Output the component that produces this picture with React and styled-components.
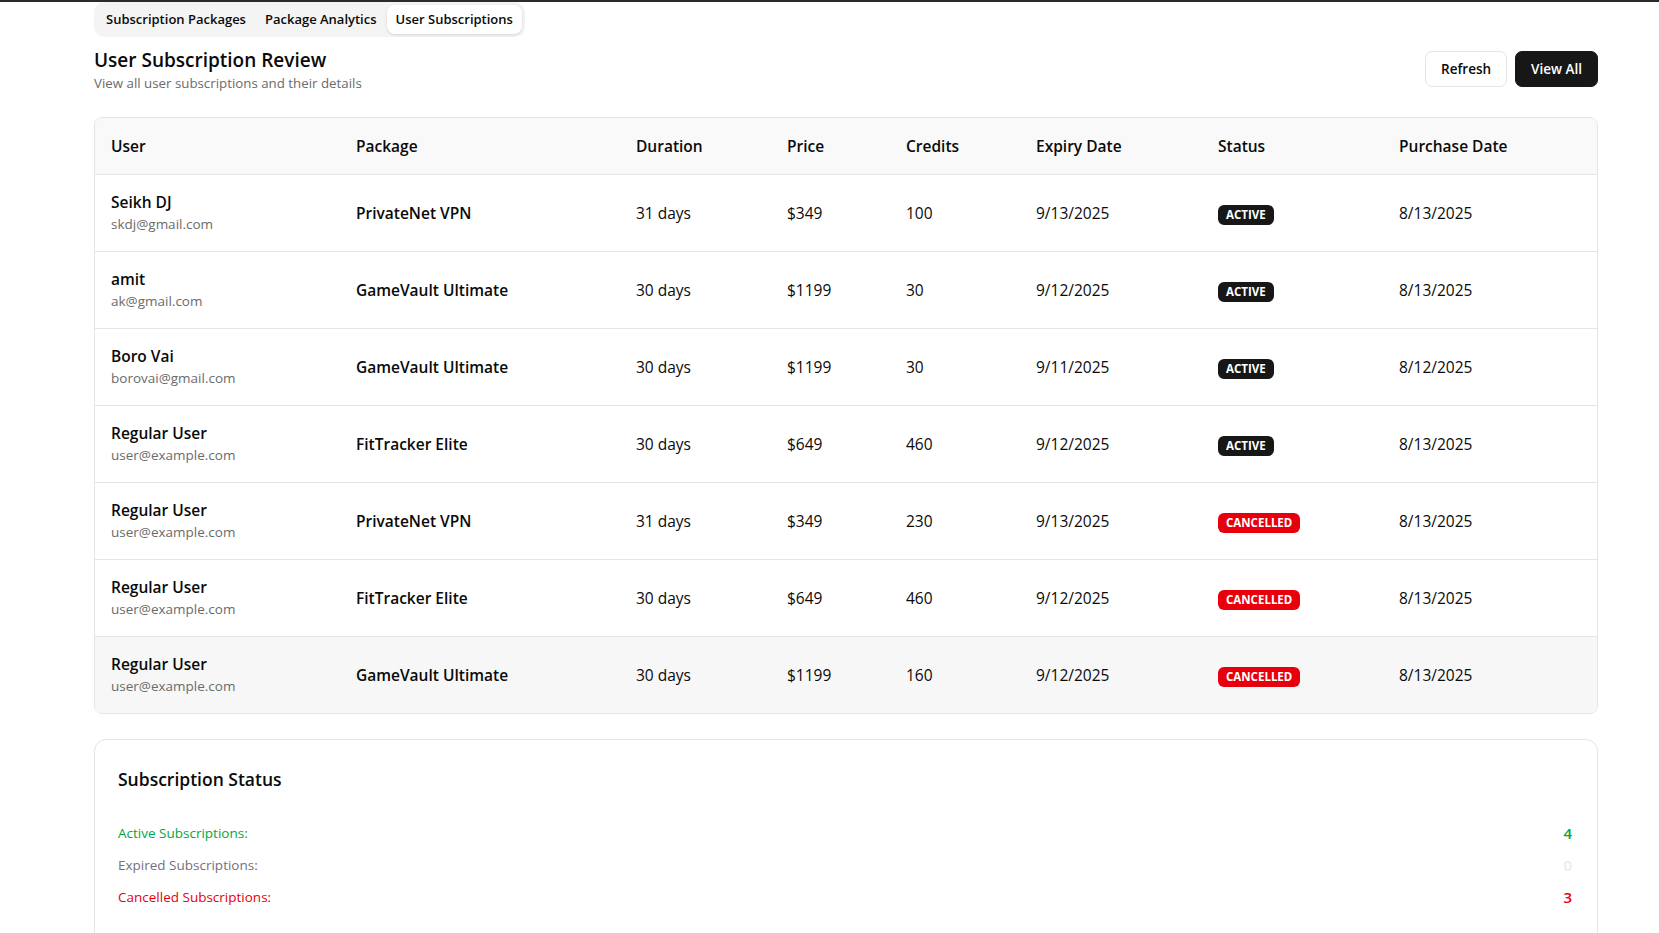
import React from 'react'
import styled, { createGlobalStyle } from 'styled-components'

const GlobalStyle = createGlobalStyle`
	body {
		margin: 0;
		background: #ffffff;
		color: #0a0a0a;
		font-family: "Open Sans", "Noto Sans", sans-serif;
	}
`

const TopBar = styled.div`
	height: 2px;
	background: #2b2b2b;
`

const Page = styled.div`
	width: 1504px;
	margin-left: 94px;
`

const Tabs = styled.div`
	display: inline-flex;
	align-items: center;
	background: #f4f4f5;
	border-radius: 10px;
	padding: 3px;
	gap: 1px;
`

const Tab = styled.div`
	font-size: 13px;
	font-weight: 600;
	padding: 5px 9px 6px;
	border-radius: 8px;
	color: #0a0a0a;
	background: ${(p) => (p.$active ? '#ffffff' : 'transparent')};
	box-shadow: ${(p) => (p.$active ? '0 1px 3px rgba(0,0,0,0.12)' : 'none')};
`

const Header = styled.div`
	display: flex;
	justify-content: space-between;
	align-items: flex-start;
	margin-top: 10px;
`

const Title = styled.h2`
	margin: 0;
	font-size: 19px;
	font-weight: 600;
	line-height: 26px;
`

const Subtitle = styled.p`
	margin: 0;
	font-size: 13.3px;
	color: #6b6b6b;
	line-height: 20px;
`

const Actions = styled.div`
	display: flex;
	gap: 8px;
	margin-top: 4px;
`

const Button = styled.button`
	height: 36px;
	padding: 0 15px;
	border-radius: 7px;
	font-family: inherit;
	font-size: 13.5px;
	font-weight: 600;
	border: 1px solid ${(p) => (p.$dark ? '#171717' : '#e5e5e5')};
	background: ${(p) => (p.$dark ? '#171717' : '#ffffff')};
	color: ${(p) => (p.$dark ? '#ffffff' : '#0a0a0a')};
`

const Card = styled.div`
	border: 1px solid #e5e5e5;
	border-radius: 8px;
	overflow: hidden;
	margin-top: 24px;
`

const Row = styled.div`
	display: grid;
	grid-template-columns: 245px 280px 151px 119px 130px 182px 181px 1fr;
	align-items: center;
	min-height: ${(p) => (p.$head ? '56px' : '76px')};
	background: ${(p) => (p.$head ? '#f9f9f9' : p.$hover ? '#f7f7f7' : '#ffffff')};
	border-top: ${(p) => (p.$head ? 'none' : '1px solid #e5e5e5')};
`

const Cell = styled.div`
	padding: 0 16px;
	font-size: 15.5px;
	font-weight: ${(p) => (p.$bold ? 600 : 400)};
	line-height: 22px;
`

const Name = styled.div`
	font-weight: 600;
`

const Email = styled.div`
	font-size: 13.5px;
	color: #6b6b6b;
	line-height: 22px;
`

const Badge = styled.span`
	display: inline-block;
	font-size: 11.5px;
	font-weight: 700;
	color: #ffffff;
	line-height: 20px;
	padding: 0 8px;
	border-radius: 6px;
	background: ${(p) => (p.$status === 'ACTIVE' ? '#171717' : '#e7000b')};
`

const StatusCard = styled.div`
	border: 1px solid #e5e5e5;
	border-radius: 12px;
	margin-top: 25px;
	padding: 26px 25px 30px 23px;
	box-shadow: 0 1px 2px rgba(0,0,0,0.04);
`

const StatusTitle = styled.h3`
	margin: 0 0 25px;
	font-size: 17.5px;
	font-weight: 600;
	line-height: 26px;
`

const StatLine = styled.div`
	display: flex;
	justify-content: space-between;
	align-items: center;
	height: 32px;
	font-size: 13.5px;
	color: ${(p) => p.$color};
`

const StatValue = styled.span`
	font-weight: 600;
	font-size: 15px;
	color: ${(p) => p.$color};
`

const subs = [
	{ name: 'Seikh DJ', email: 'skdj@gmail.com', pkg: 'PrivateNet VPN', days: '31 days', price: '$349', credits: '100', expiry: '9/13/2025', status: 'ACTIVE', bought: '8/13/2025' },
	{ name: 'amit', email: 'ak@gmail.com', pkg: 'GameVault Ultimate', days: '30 days', price: '$1199', credits: '30', expiry: '9/12/2025', status: 'ACTIVE', bought: '8/13/2025' },
	{ name: 'Boro Vai', email: 'borovai@gmail.com', pkg: 'GameVault Ultimate', days: '30 days', price: '$1199', credits: '30', expiry: '9/11/2025', status: 'ACTIVE', bought: '8/12/2025' },
	{ name: 'Regular User', email: 'user@example.com', pkg: 'FitTracker Elite', days: '30 days', price: '$649', credits: '460', expiry: '9/12/2025', status: 'ACTIVE', bought: '8/13/2025' },
	{ name: 'Regular User', email: 'user@example.com', pkg: 'PrivateNet VPN', days: '31 days', price: '$349', credits: '230', expiry: '9/13/2025', status: 'CANCELLED', bought: '8/13/2025' },
	{ name: 'Regular User', email: 'user@example.com', pkg: 'FitTracker Elite', days: '30 days', price: '$649', credits: '460', expiry: '9/12/2025', status: 'CANCELLED', bought: '8/13/2025' },
	{ name: 'Regular User', email: 'user@example.com', pkg: 'GameVault Ultimate', days: '30 days', price: '$1199', credits: '160', expiry: '9/12/2025', status: 'CANCELLED', bought: '8/13/2025' },
]

const heads = ['User', 'Package', 'Duration', 'Price', 'Credits', 'Expiry Date', 'Status', 'Purchase Date']

const App = () => {
	return (
		<>
			<GlobalStyle />
			<TopBar />
			<Page>
				<Tabs>
					<Tab>Subscription Packages</Tab>
					<Tab>Package Analytics</Tab>
					<Tab $active>User Subscriptions</Tab>
				</Tabs>
				<Header>
					<div>
						<Title>User Subscription Review</Title>
						<Subtitle>View all user subscriptions and their details</Subtitle>
					</div>
					<Actions>
						<Button>Refresh</Button>
						<Button $dark>View All</Button>
					</Actions>
				</Header>
				<Card>
					<Row $head>
						{heads.map((h) => (
							<Cell key={h} $bold>{h}</Cell>
						))}
					</Row>
					{subs.map((s, i) => (
						<Row key={i} $hover={i === subs.length - 1}>
							<Cell>
								<Name>{s.name}</Name>
								<Email>{s.email}</Email>
							</Cell>
							<Cell $bold>{s.pkg}</Cell>
							<Cell>{s.days}</Cell>
							<Cell>{s.price}</Cell>
							<Cell>{s.credits}</Cell>
							<Cell>{s.expiry}</Cell>
							<Cell>
								<Badge $status={s.status}>{s.status}</Badge>
							</Cell>
							<Cell>{s.bought}</Cell>
						</Row>
					))}
				</Card>
				<StatusCard>
					<StatusTitle>Subscription Status</StatusTitle>
					<StatLine $color="#00a63e">
						Active Subscriptions:
						<StatValue $color="#00a63e">4</StatValue>
					</StatLine>
					<StatLine $color="#717182">
						Expired Subscriptions:
						<StatValue $color="#ececec">0</StatValue>
					</StatLine>
					<StatLine $color="#e7000b">
						Cancelled Subscriptions:
						<StatValue $color="#e7000b">3</StatValue>
					</StatLine>
				</StatusCard>
			</Page>
		</>
	)
}

export default App
